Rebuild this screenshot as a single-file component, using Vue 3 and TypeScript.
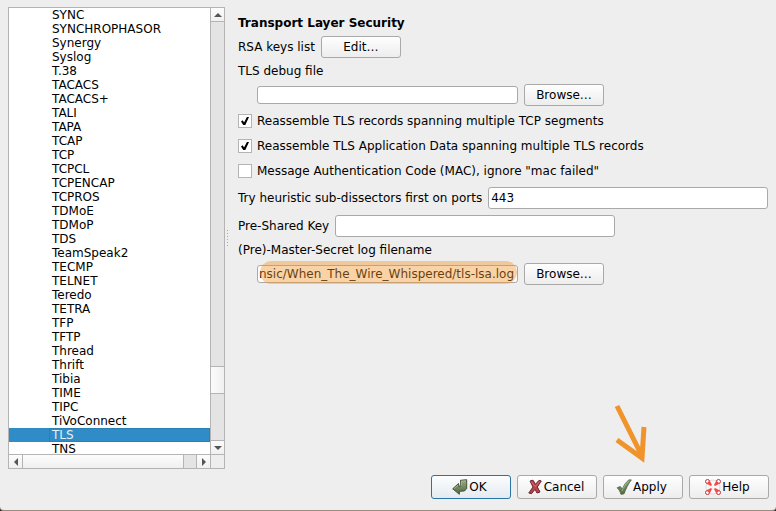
<script setup lang="ts">
import { ref } from 'vue'

const protocols: string[] = [
  'SYNC', 'SYNCHROPHASOR', 'Synergy', 'Syslog', 'T.38', 'TACACS', 'TACACS+', 'TALI',
  'TAPA', 'TCAP', 'TCP', 'TCPCL', 'TCPENCAP', 'TCPROS', 'TDMoE', 'TDMoP', 'TDS',
  'TeamSpeak2', 'TECMP', 'TELNET', 'Teredo', 'TETRA', 'TFP', 'TFTP', 'Thread',
  'Thrift', 'Tibia', 'TIME', 'TIPC', 'TiVoConnect', 'TLS', 'TNS',
]
const selected = ref<string>('TLS')

const debugFile = ref<string>('')
const ports = ref<string>('443')
const preSharedKey = ref<string>('')
const secretLog = ref<string>('nsic/When_The_Wire_Whispered/tls-lsa.log')

interface Option {
  id: string
  label: string
  checked: boolean
}
const options = ref<Option[]>([
  { id: 'reassemble-records', label: 'Reassemble TLS records spanning multiple TCP segments', checked: true },
  { id: 'reassemble-data', label: 'Reassemble TLS Application Data spanning multiple TLS records', checked: true },
  { id: 'ignore-mac', label: 'Message Authentication Code (MAC), ignore "mac failed"', checked: false },
])
</script>

<template>
  <div class="dialog">
    <main class="body">
      <section class="tree">
        <ul class="list" role="listbox" aria-label="Protocols">
          <li
            v-for="name in protocols"
            :key="name"
            role="option"
            :aria-selected="name === selected"
            :class="['item', { active: name === selected }]"
            @click="selected = name"
          ><span class="name">{{ name }}</span></li>
        </ul>
        <div class="bar vertical">
          <button class="step" type="button" aria-label="Scroll up"><svg viewBox="0 0 8 4"><path d="M0 4L4 0L8 4Z" /></svg></button>
          <div class="track"><div class="thumb"></div></div>
          <button class="step" type="button" aria-label="Scroll down"><svg viewBox="0 0 8 4"><path d="M0 0H8L4 4Z" /></svg></button>
        </div>
        <div class="bar horizontal">
          <button class="step" type="button" aria-label="Scroll left"><svg class="side" viewBox="0 0 4 8"><path d="M4 0V8L0 4Z" /></svg></button>
          <div class="track"><div class="thumb"></div></div>
          <button class="step" type="button" aria-label="Scroll right"><svg class="side" viewBox="0 0 4 8"><path d="M0 0L4 4L0 8Z" /></svg></button>
        </div>
        <div class="corner"></div>
      </section>

      <div class="splitter"><i v-for="n in 6" :key="n"></i></div>

      <form class="form" @submit.prevent>
        <h1 class="title">Transport Layer Security</h1>
        <div class="row">
          <span>RSA keys list</span>
          <button class="button" type="button">Edit…</button>
        </div>
        <label class="caption" for="debug-file">TLS debug file</label>
        <div class="row indent">
          <span class="file"><input id="debug-file" v-model="debugFile" class="field short" type="text"></span>
          <button class="button" type="button">Browse…</button>
        </div>
        <div v-for="option in options" :key="option.id" class="row check">
          <input :id="option.id" v-model="option.checked" class="tick" type="checkbox">
          <label :for="option.id">{{ option.label }}</label>
        </div>
        <div class="row">
          <label for="ports">Try heuristic sub-dissectors first on ports</label>
          <input id="ports" v-model="ports" class="field" type="text">
        </div>
        <div class="row">
          <label for="psk">Pre-Shared Key</label>
          <input id="psk" v-model="preSharedKey" class="field" type="text">
        </div>
        <label class="caption" for="secret-log">(Pre)-Master-Secret log filename</label>
        <div class="row indent">
          <span class="file">
            <input id="secret-log" v-model="secretLog" class="field short" type="text">
            <span class="marker"></span>
          </span>
          <button class="button" type="button">Browse…</button>
        </div>
      </form>
    </main>

    <footer class="actions">
      <button class="button tall primary" type="button">
        <svg class="icon" viewBox="0 0 16 16">
          <defs>
            <linearGradient id="green" x1="0" y1="0" x2="0" y2="1">
              <stop offset="0" stop-color="#9aab84" /><stop offset="1" stop-color="#4d6840" />
            </linearGradient>
          </defs>
          <path d="M8.500 1.300L14.700 .7V9.500L12.500 12L7.500 12.300L7.300 15.300L.7 9.800L6.500 4.500L7 7.500L8.800 6.800Z" fill="url(#green)" stroke="#45543b" stroke-linejoin="round" />
          <path d="M9.500 6.500V2.300L13.700 1.800M2.200 9.600L5.900 6.200" fill="none" stroke="#b4c0a3" stroke-width=".7" />
        </svg>OK
      </button>
      <button class="button tall" type="button">
        <svg class="icon" viewBox="0 0 16 16">
          <path d="M3 2L6 1.200L8.500 5.300L12 1.300L14.300 2L10.300 8L13 13L10 14L8 10.300L4.500 14.700L1.800 14L6 8Z" fill="#bd434b" stroke="#66262d" stroke-linejoin="round" />
          <path d="M4.200 2.700L8.200 7.500L12.500 2.500" fill="none" stroke="#d8747a" stroke-width=".8" />
        </svg>Cancel
      </button>
      <span class="pointed">
        <button class="button tall" type="button">
          <svg class="icon" viewBox="0 0 16 16">
            <path d="M1.200 8.800L4.300 7.600L6.300 10.200C8 6 10.500 2.500 13 .9H15.300C12 5 9.800 10 8 14.800L5 15.300C4.200 12.500 3 10.500 1.200 8.800Z" fill="url(#green)" stroke="#4b6340" stroke-width=".9" stroke-linejoin="round" />
            <path d="M5.900 12.200C7.500 8 10 4 13 1.900" fill="none" stroke="#a9ba94" stroke-width=".8" />
          </svg>Apply
        </button>
        <svg class="arrow" viewBox="0 0 32 58">
          <path d="M3 3L28 53M3 37L28 55L30 24" />
        </svg>
      </span>
      <button class="button tall" type="button">
        <svg class="icon" viewBox="0 0 16 16">
          <circle cx="8" cy="8" r="5" fill="none" stroke="#f8f8f8" stroke-width="4" />
          <circle cx="8" cy="8" r="7" fill="none" stroke="#c8c8c8" stroke-width=".6" />
          <g fill="#fff" stroke="#c02f35" stroke-width="1">
            <circle cx="2.500" cy="2.500" r="2" /><circle cx="13.500" cy="2.500" r="2" />
            <circle cx="2.500" cy="13.500" r="2" /><circle cx="13.500" cy="13.500" r="2" />
          </g>
          <g fill="#f5484b">
            <path d="M5 2L7 6L6 7L2 5L2.500 3.500L3.500 2.500Z" /><path d="M11 2L9 6L10 7L14 5L13.500 3.500L12.500 2.500Z" />
            <path d="M5 14L7 10L6 9L2 11L2.500 12.500L3.500 13.500Z" /><path d="M11 14L9 10L10 9L14 11L13.500 12.500L12.500 13.500Z" />
          </g>
        </svg>Help
      </button>
    </footer>
  </div>
</template>

<style>
body {
  margin: 0;
  background: #33302c;
}
</style>

<style scoped>
* {
  box-sizing: border-box;
}
.dialog {
  display: flex;
  flex-direction: column;
  gap: 6px;
  height: 100vh;
  padding: 7px 7px 11px 8px;
  background: #eeeeee;
  border-bottom: 1px solid #9a8c80;
  border-radius: 0 0 4px 4px;
  color: #000;
  font: 12px/14px "DejaVu Sans", sans-serif;
}
.body {
  display: flex;
  flex: 1;
  min-height: 0;
}
.tree {
  display: grid;
  grid-template-columns: 1fr 14px;
  grid-template-rows: 1fr 14px;
  width: 28%;
  min-width: 217px;
  border: 1px solid #b4b4b4;
  background: #fff;
}
.list {
  min-height: 0;
  margin: 0;
  padding: 0;
  overflow: hidden;
  list-style: none;
}
.item {
  display: flex;
  height: 14px;
  padding-left: 40px;
}
.name {
  flex: 1;
  padding-left: 3px;
}
.active {
  background: #308cc6;
  color: #e4f0f8;
}
.active .name {
  box-shadow: inset 0 0 0 1px #2a7fb5;
}
.bar {
  display: flex;
  min-height: 0;
  border: 0 solid #b4b4b4;
  background: #e4e4e4;
}
.vertical {
  flex-direction: column;
  border-left-width: 1px;
}
.horizontal {
  border-top-width: 1px;
}
.step {
  display: flex;
  flex: none;
  align-items: center;
  justify-content: center;
  width: 13px;
  height: 13px;
  padding: 0;
  border: 0;
  background: linear-gradient(#fcfcfc, #f0f0f0);
}
.step svg {
  width: 8px;
  height: 4px;
  fill: #555;
}
.step .side {
  width: 4px;
  height: 8px;
}
.track {
  display: flex;
  flex: 1;
  min-height: 0;
  border: 0 solid #b4b4b4;
}
.vertical .track {
  flex-direction: column;
  justify-content: flex-end;
  padding-bottom: 46px;
  border-width: 1px 0;
}
.vertical .thumb {
  height: 28px;
  border: solid #b4b4b4;
  border-width: 1px 0;
  background: linear-gradient(90deg, #fcfcfc, #f0f0f0);
}
.horizontal .track {
  padding-right: 12px;
  border-width: 0 1px;
}
.horizontal .thumb {
  flex: 1;
  border-right: 1px solid #b4b4b4;
  background: linear-gradient(#fcfcfc, #f0f0f0);
}
.corner {
  border: solid #b4b4b4;
  border-width: 1px 0 0 1px;
  background: #eee;
}
.splitter {
  display: flex;
  flex: none;
  flex-direction: column;
  justify-content: center;
  gap: 2px;
  width: 13px;
  padding-left: 2px;
}
.splitter i {
  width: 1px;
  height: 1px;
  background: #a8a8a8;
}
.form {
  display: flex;
  flex: 1;
  flex-direction: column;
  gap: 6px;
  padding-top: 9px;
}
.title {
  margin: 0;
  font-size: 12px;
  line-height: 14px;
}
.row {
  display: flex;
  align-items: center;
  gap: 6px;
}
.indent {
  padding-left: 19px;
}
.check {
  align-items: flex-start;
  gap: 5px;
  height: 19px;
  padding-top: 2px;
}
.button {
  display: flex;
  align-items: center;
  justify-content: center;
  gap: 1px;
  width: 80px;
  height: 22px;
  padding: 0;
  border: 1px solid #a9a9a9;
  border-radius: 3px;
  background: linear-gradient(#fefefe, #ededed);
  color: #000;
  font: inherit;
}
.tall {
  height: 24px;
  padding-right: 3px;
}
.primary {
  border-color: #2a73a5;
  background: linear-gradient(#fcfdfe, #e4ebf0);
}
.field {
  width: 280px;
  height: 22px;
  padding: 0 2px;
  border: 1px solid #a9a9a9;
  border-radius: 3px;
  outline: none;
  background: #fff;
  color: #000;
  font: inherit;
}
.short {
  width: 261px;
  height: 18px;
  padding: 0 1px;
}
.file {
  position: relative;
  display: flex;
}
.marker {
  position: absolute;
  inset: -4px 1px -1px 3px;
  border-radius: 12px;
  background: #f0932b;
  opacity: 0.42;
  pointer-events: none;
}
.tick {
  position: relative;
  width: 14px;
  height: 14px;
  margin: 0;
  border: 1px solid #b4b4b4;
  background: #fff;
  appearance: none;
}
.tick:checked::before {
  position: absolute;
  inset: 2px;
  background: #000;
  clip-path: polygon(0 55%, 22% 42%, 38% 68%, 74% 0, 100% 0, 54% 100%, 28% 100%);
  content: "";
}
.actions {
  display: flex;
  justify-content: flex-end;
  gap: 6px;
}
.icon {
  flex: none;
  width: 16px;
  height: 16px;
}
.pointed {
  position: relative;
}
.arrow {
  position: absolute;
  bottom: 38px;
  left: 11px;
  width: 32px;
  height: 58px;
  overflow: visible;
  fill: none;
  stroke: #f0932b;
  stroke-width: 5;
  pointer-events: none;
}
</style>
